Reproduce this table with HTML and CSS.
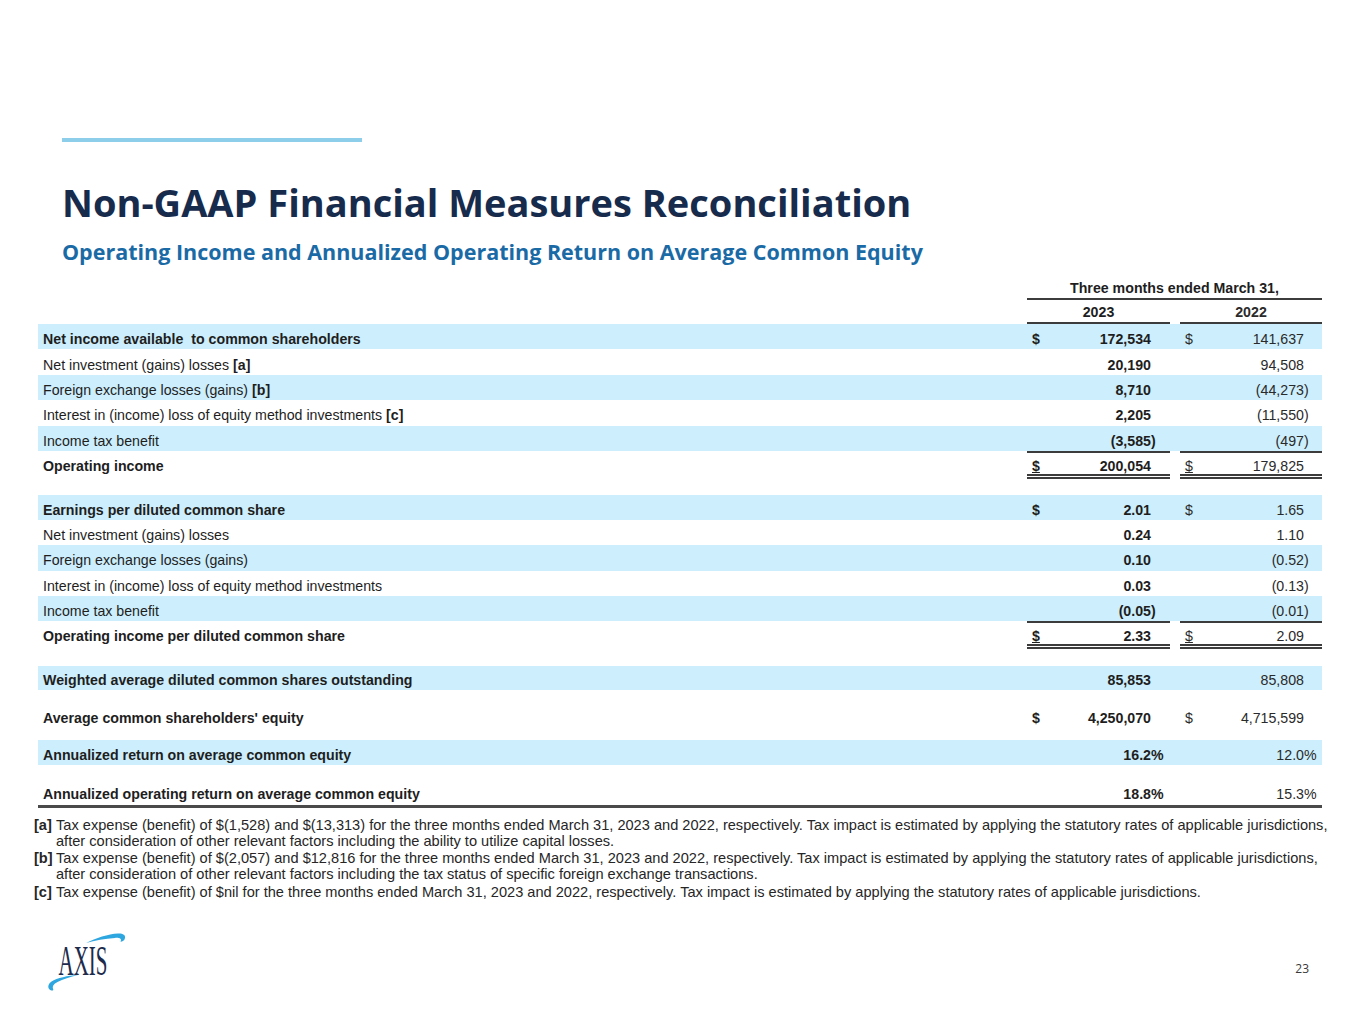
FILE: index.html
```html
<!DOCTYPE html>
<html lang="en">
<head>
<meta charset="utf-8">
<title>Non-GAAP Financial Measures Reconciliation</title>
<link rel="stylesheet" href="styles.css">
</head>
<body>
<div class="slide">
  <div class="accent"></div>
  <h1 class="title">Non-GAAP Financial Measures Reconciliation</h1>
  <h2 class="subtitle">Operating Income and Annualized Operating Return on Average Common Equity</h2>

  <div class="table">
    <div class="row hdr1"><div class="label"></div><div class="span2">Three months ended March 31,</div></div>
    <div class="row hdr2"><div class="label"></div><div class="c c1 ctr">2023</div><div class="gap"></div><div class="c c2 ctr">2022</div></div>

    <div class="row band"><div class="label b">Net income available&nbsp; to common shareholders</div><div class="c c1 b"><span class="d">$</span><span class="n">172,534</span></div><div class="gap"></div><div class="c c2"><span class="d">$</span><span class="n">141,637</span></div></div>
    <div class="row"><div class="label">Net investment (gains) losses <b>[a]</b></div><div class="c c1 b"><span class="n">20,190</span></div><div class="gap"></div><div class="c c2"><span class="n">94,508</span></div></div>
    <div class="row band"><div class="label">Foreign exchange losses (gains) <b>[b]</b></div><div class="c c1 b"><span class="n">8,710</span></div><div class="gap"></div><div class="c c2"><span class="n">(44,273<span class="hp">)</span></span></div></div>
    <div class="row"><div class="label">Interest in (income) loss of equity method investments <b>[c]</b></div><div class="c c1 b"><span class="n">2,205</span></div><div class="gap"></div><div class="c c2"><span class="n">(11,550<span class="hp">)</span></span></div></div>
    <div class="row band"><div class="label">Income tax benefit</div><div class="c c1 b"><span class="n">(3,585<span class="hp">)</span></span></div><div class="gap"></div><div class="c c2"><span class="n">(497<span class="hp">)</span></span></div></div>
    <div class="row total"><div class="label b">Operating income</div><div class="c c1 b"><span class="d u">$</span><span class="n">200,054</span></div><div class="gap"></div><div class="c c2"><span class="d u">$</span><span class="n">179,825</span></div></div>

    <div class="row band sec"><div class="label b">Earnings per diluted common share</div><div class="c c1 b"><span class="d">$</span><span class="n">2.01</span></div><div class="gap"></div><div class="c c2"><span class="d">$</span><span class="n">1.65</span></div></div>
    <div class="row r2"><div class="label">Net investment (gains) losses</div><div class="c c1 b"><span class="n">0.24</span></div><div class="gap"></div><div class="c c2"><span class="n">1.10</span></div></div>
    <div class="row band r2"><div class="label">Foreign exchange losses (gains)</div><div class="c c1 b"><span class="n">0.10</span></div><div class="gap"></div><div class="c c2"><span class="n">(0.52<span class="hp">)</span></span></div></div>
    <div class="row r2"><div class="label">Interest in (income) loss of equity method investments</div><div class="c c1 b"><span class="n">0.03</span></div><div class="gap"></div><div class="c c2"><span class="n">(0.13<span class="hp">)</span></span></div></div>
    <div class="row band r2"><div class="label">Income tax benefit</div><div class="c c1 b"><span class="n">(0.05<span class="hp">)</span></span></div><div class="gap"></div><div class="c c2"><span class="n">(0.01<span class="hp">)</span></span></div></div>
    <div class="row total"><div class="label b">Operating income per diluted common share</div><div class="c c1 b"><span class="d u">$</span><span class="n">2.33</span></div><div class="gap"></div><div class="c c2"><span class="d u">$</span><span class="n">2.09</span></div></div>

    <div class="row band wavg"><div class="label b">Weighted average diluted common shares outstanding</div><div class="c c1 b"><span class="n">85,853</span></div><div class="gap"></div><div class="c c2"><span class="n">85,808</span></div></div>
    <div class="row avg"><div class="label b">Average common shareholders' equity</div><div class="c c1 b"><span class="d">$</span><span class="n">4,250,070</span></div><div class="gap"></div><div class="c c2"><span class="d">$</span><span class="n">4,715,599</span></div></div>
    <div class="row band ret"><div class="label b">Annualized return on average common equity</div><div class="c c1 b"><span class="n">16.2<span class="hpc">%</span></span></div><div class="gap"></div><div class="c c2"><span class="n">12.0<span class="hpc">%</span></span></div></div>
    <div class="row last"><div class="label b">Annualized operating return on average common equity</div><div class="c c1 b"><span class="n">18.8<span class="hpc">%</span></span></div><div class="gap"></div><div class="c c2"><span class="n">15.3<span class="hpc">%</span></span></div></div>
  </div>

  <div class="notes">
    <p><b class="mk">[a]</b>Tax expense (benefit) of $(1,528) and $(13,313) for the three months ended March 31, 2023 and 2022, respectively. Tax impact is estimated by applying the statutory rates of applicable jurisdictions, after consideration of other relevant factors including the ability to utilize capital losses.</p>
    <p><b class="mk">[b]</b>Tax expense (benefit) of $(2,057) and $12,816 for the three months ended March 31, 2023 and 2022, respectively. Tax impact is estimated by applying the statutory rates of applicable jurisdictions, after consideration of other relevant factors including the tax status of specific foreign exchange transactions.</p>
    <p><b class="mk">[c]</b>Tax expense (benefit) of $nil for the three months ended March 31, 2023 and 2022, respectively. Tax impact is estimated by applying the statutory rates of applicable jurisdictions.</p>
  </div>

  <div class="footer">
    <svg class="logo" width="96" height="66" viewBox="0 0 96 66" aria-label="AXIS">
      <path d="M48 15 C58 10 70 6 80 5.5 C85 5.3 87.5 7 87 10 C86.5 12.5 84.5 13.8 82.5 13.8 C84 11 82 9.6 77 9.9 C67 10.4 57 12.5 48 15 Z" fill="#2ea6df"/>
      <path d="M40 47 C30 47.5 19 50 13.5 53.5 C9 56.5 9.5 61.5 13.5 62.5 C15 62.8 15.8 62 15 60.8 C14 58.5 15.5 56 19.5 54 C25 51.2 32 49 40 47 Z" fill="#2ea6df"/>
      <text x="20.5" y="47.3" textLength="49" lengthAdjust="spacingAndGlyphs" class="logo-text">AXIS</text>
    </svg>
    <div class="page">23</div>
  </div>
</div>
</body>
</html>
```
FILE: styles.css
```css
* { box-sizing: border-box; }
body { margin: 0; background: #fff; }
.slide {
  width: 1365px;
  height: 1022px;
  overflow: hidden;
  background: #fff;
  font-family: "Liberation Sans", Arial, sans-serif;
  color: #1e1e1e;
}
.accent {
  margin: 138px 0 0 62px;
  width: 300px;
  height: 4px;
  background: #8dcfeb;
}
.title {
  margin: 37px 0 0 62px;
  font: 700 38px/46px "Open Sans", sans-serif;
  color: #172b4d;
}
.subtitle {
  margin: 14px 0 0 62px;
  font: 700 21.5px/26px "Open Sans", sans-serif;
  color: #1a6aa6;
}
.table {
  margin: 11px 0 0 38px;
  width: 1284px;
  font-size: 14.2px;
}
.row {
  display: flex;
  height: 25.4px;
}
.label {
  flex: 1;
  display: flex;
  align-items: center;
  padding: 5px 0 0 5px;
  white-space: pre;
}
.b { font-weight: 700; }
.c {
  display: flex;
  align-items: center;
  padding-top: 5px;
}
.c1 { width: 143px; padding-left: 5px; padding-right: 19px; }
.c2 { width: 142px; padding-left: 5px; padding-right: 18px; color: #2a2a2a; }
.gap { width: 10px; }
.n { margin-left: auto; white-space: nowrap; }
.hp { margin-right: -0.333em; }
.hpc { margin-right: -0.889em; }
.band { background: #cdeefc; }
.ctr { justify-content: center; font-weight: 700; }

.hdr1 { height: 24px; }
.hdr1 .label { padding-top: 0; }
.hdr1 .span2 {
  width: 295px;
  display: flex;
  align-items: center;
  justify-content: center;
  font-weight: 700;
  padding-top: 1px;
  border-bottom: 2px solid #3c3c3c;
}
.hdr2 { height: 24px; }
.hdr2 .label { padding-top: 0; }
.hdr2 .c1, .hdr2 .c2 { border-bottom: 2px solid #3c3c3c; padding: 1px 0 0; }

.total { height: 28px; }
.total .c1, .total .c2 {
  border-top: 2px solid #3c3c3c;
  border-bottom: 5px double #3c3c3c;
}
.total .label { padding-top: 7px; padding-bottom: 5px; }
.u { text-decoration: underline; }

.sec { margin-top: 16px; }
.r2, .sec { height: 25.2px; }
.wavg { margin-top: 17px; height: 24px; }
.avg { margin-top: 13px; height: 26px; }
.ret { margin-top: 11px; height: 25px; }
.last { margin-top: 14px; height: 29px; border-bottom: 3px solid #4a4a4a; }

.notes {
  margin: 9px 0 0 34px;
  width: 1296px;
  font-size: 14.6px;
  line-height: 16px;
  color: #262626;
}
.notes p {
  margin: 0 0 1.5px;
  padding-left: 22px;
  text-indent: -22px;
}
.mk { display: inline-block; width: 22px; text-indent: 0; }

.footer {
  margin-top: 28px;
  display: flex;
  justify-content: space-between;
  align-items: flex-start;
}
.logo { margin-left: 38px; display: block; overflow: visible; }
.logo-text {
  font-family: "Liberation Serif", serif;
  font-size: 41.5px;
  fill: #1d2b4c;
}
.page {
  margin: 34px 56px 0 0;
  font: 12px/14px "Open Sans", sans-serif;
  color: #3a3a3a;
}
```
